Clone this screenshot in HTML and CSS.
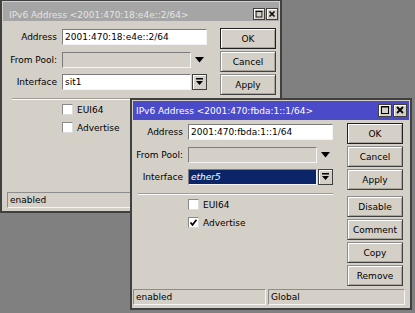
FILE: index.html
```html
<!DOCTYPE html>
<html>
<head>
<meta charset="utf-8">
<link rel="stylesheet" href="styles.css">
</head>
<body>
<div class="desk">
  <div class="backwin"></div>

  <div class="win win1">
    <div class="titlebar inactive">
      <span class="title">IPv6 Address &lt;2001:470:18:e4e::2/64&gt;</span>
      <span class="tbtns">
        <span class="tb"><svg width="12" height="11" viewBox="0 0 12 11"><rect x="2.5" y="1.5" width="7" height="7" fill="none" stroke="#000"/><line x1="2" y1="2" x2="10" y2="2" stroke="#000"/></svg></span>
        <span class="tb"><svg width="12" height="11" viewBox="0 0 12 11"><path d="M3 2 L9 8 M9 2 L3 8" stroke="#000" stroke-width="1.8"/></svg></span>
      </span>
    </div>
    <div class="body">
      <div class="form">
        <div class="row"><span class="lbl">Address</span><span class="field wide">2001:470:18:e4e::2/64</span></div>
        <div class="row"><span class="lbl">From Pool:</span><span class="field narrow disabled"></span><span class="arrow"><svg width="9" height="6" viewBox="0 0 9 6"><path d="M0 0 H9 L4.5 5.5 Z" fill="#000"/></svg></span></div>
        <div class="row"><span class="lbl">Interface</span><span class="field narrow">sit1</span><span class="ddbtn"><svg width="7" height="8" viewBox="0 0 7 8"><rect x="0" y="0" width="7" height="1.5" fill="#000"/><path d="M0 3 H7 L3.5 7 Z" fill="#000"/></svg></span></div>
        <div class="sep"></div>
        <div class="check"><span class="box"></span><span>EUI64</span></div>
        <div class="check second"><span class="box"></span><span>Advertise</span></div>
      </div>
      <div class="buttons">
        <div class="btn default">OK</div>
        <div class="btn">Cancel</div>
        <div class="btn">Apply</div>
      </div>
    </div>
    <div class="status">
      <div class="sfield s1">enabled</div>
      <div class="sfield s2"></div>
    </div>
  </div>

  <div class="win win2">
    <div class="titlebar">
      <span class="title">IPv6 Address &lt;2001:470:fbda:1::1/64&gt;</span>
      <span class="tbtns">
        <span class="tb"><svg width="12" height="11" viewBox="0 0 12 11"><rect x="2.5" y="1.5" width="7" height="7" fill="none" stroke="#000"/><line x1="2" y1="2" x2="10" y2="2" stroke="#000"/></svg></span>
        <span class="tb"><svg width="12" height="11" viewBox="0 0 12 11"><path d="M3 2 L9 8 M9 2 L3 8" stroke="#000" stroke-width="1.8"/></svg></span>
      </span>
    </div>
    <div class="body">
      <div class="form">
        <div class="row"><span class="lbl">Address</span><span class="field wide">2001:470:fbda:1::1/64</span></div>
        <div class="row"><span class="lbl">From Pool:</span><span class="field narrow disabled"></span><span class="arrow"><svg width="9" height="6" viewBox="0 0 9 6"><path d="M0 0 H9 L4.5 5.5 Z" fill="#000"/></svg></span></div>
        <div class="row"><span class="lbl">Interface</span><span class="field narrow selected">ether5</span><span class="ddbtn"><svg width="7" height="8" viewBox="0 0 7 8"><rect x="0" y="0" width="7" height="1.5" fill="#000"/><path d="M0 3 H7 L3.5 7 Z" fill="#000"/></svg></span></div>
        <div class="sep"></div>
        <div class="check"><span class="box"></span><span>EUI64</span></div>
        <div class="check second"><span class="box"><svg width="9" height="9" viewBox="0 0 9 9"><path d="M1.5 4.5 L3.5 6.8 L7.5 1.8" fill="none" stroke="#000" stroke-width="1.7"/></svg></span><span>Advertise</span></div>
      </div>
      <div class="buttons">
        <div class="btn default">OK</div>
        <div class="btn">Cancel</div>
        <div class="btn">Apply</div>
        <div class="btn gap">Disable</div>
        <div class="btn">Comment</div>
        <div class="btn">Copy</div>
        <div class="btn">Remove</div>
      </div>
    </div>
    <div class="status">
      <div class="sfield s1">enabled</div>
      <div class="sfield s2">Global</div>
    </div>
  </div>
</div>
</body>
</html>
```

FILE: styles.css
```css
* { box-sizing: border-box; }
html, body { margin: 0; padding: 0; }
body {
  width: 415px;
  height: 313px;
  overflow: hidden;
  background: #808080;
  font-family: "DejaVu Sans", Verdana, sans-serif;
  font-size: 9px;
  color: #000;
}
.desk { position: relative; width: 415px; height: 313px; }

.backwin {
  position: absolute;
  left: -10px;
  top: -10px;
  width: 16px;
  height: 223px;
  background: #d4d0c8;
  border: 2px solid #404040;
}

.win {
  position: absolute;
  background: #d4d0c8;
  border: 2px solid #404040;
  padding: 1px;
  display: flex;
  flex-direction: column;
}
.win1 { left: 0; top: -1px; width: 282px; height: 214px; }
.win2 { left: 130px; top: 98px; width: 282px; height: 212px; }

.titlebar {
  height: 19px;
  flex: none;
  display: flex;
  align-items: center;
  justify-content: space-between;
  padding: 0 2px 0 3px;
  background: #4b4bc9;
  color: #fff;
  white-space: nowrap;
}
.titlebar.inactive {
  background: #a5a5a5;
  color: #e4e4e4;
  align-items: flex-end;
  padding: 0 1px 1px 6px;
}
.tbtns { display: flex; gap: 1px; }
.tb {
  width: 14px;
  height: 13px;
  display: flex;
  align-items: center;
  justify-content: center;
  background: #d4d0c8;
  border: 1px solid #404040;
  box-shadow: inset 1px 1px #fff;
}
.inactive .tb { width: 12px; height: 12px; }

.body {
  flex: 1;
  display: flex;
  padding-top: 3px;
}
.win1 .body { padding-top: 7px; padding-left: 4px; }

.form { width: 200px; padding-top: 1px; }
.row { display: flex; align-items: center; height: 16px; }
.row + .row { margin-top: 6.5px; }
.lbl { width: 55px; padding-right: 5px; text-align: right; white-space: nowrap; }
.field {
  height: 16px;
  background: #fff;
  border: 1px solid;
  border-color: #7c7c7c #f4f4f4 #f4f4f4 #7c7c7c;
  padding: 0 2px;
  line-height: 14px;
  white-space: nowrap;
  overflow: hidden;
}
.field.wide { width: 145px; }
.field.narrow { width: 129px; }
.field.disabled { background: #d4d0c8; }
.field.selected { background: #0c2468; color: #fff; font-style: italic; }
.arrow { width: 16px; display: flex; justify-content: center; padding-top: 1px; }
.ddbtn {
  width: 15px;
  height: 16px;
  margin-left: 1px;
  display: flex;
  align-items: center;
  justify-content: center;
  background: #d4d0c8;
  border: 1px solid #404040;
  box-shadow: inset 1px 1px #fff;
}

.sep {
  margin: 8px 0 0 5px;
  width: 195px;
  height: 2px;
  border-top: 1px solid #a09c94;
  border-bottom: 1px solid #fbfbfb;
}
.check { display: flex; align-items: center; gap: 4px; height: 11px; margin: 4px 0 0 55px; }
.check.second { margin-top: 7px; }
.box {
  width: 11px;
  height: 11px;
  background: #fff;
  border: 1px solid;
  border-color: #8a8a8a #dcdcdc #dcdcdc #8a8a8a;
  display: flex;
  align-items: center;
  justify-content: center;
}

.buttons { margin-left: 14px; display: flex; flex-direction: column; gap: 2px; }
.win1 .buttons { margin-left: 13px; }
.btn {
  width: 56px;
  height: 21px;
  display: flex;
  align-items: center;
  justify-content: center;
  background: #d4d0c8;
  border: 1px solid;
  border-color: #8c8c8c #404040 #404040 #8c8c8c;
  box-shadow: inset 1px 1px #fff, inset -1px -1px #a8a49c;
}
.btn.default { border-color: #202020; }
.btn.gap { margin-top: 4px; }

.status { display: flex; gap: 2px; height: 16px; margin-bottom: 2px; flex: none; }
.win1 .status { margin-left: 4px; }
.sfield {
  height: 16px;
  border: 1px solid;
  border-color: #8c8c8c #f4f4f4 #f4f4f4 #8c8c8c;
  padding-left: 2px;
  line-height: 14px;
  white-space: nowrap;
}
.s1 { width: 133px; }
.s2 { width: 137px; }
```
